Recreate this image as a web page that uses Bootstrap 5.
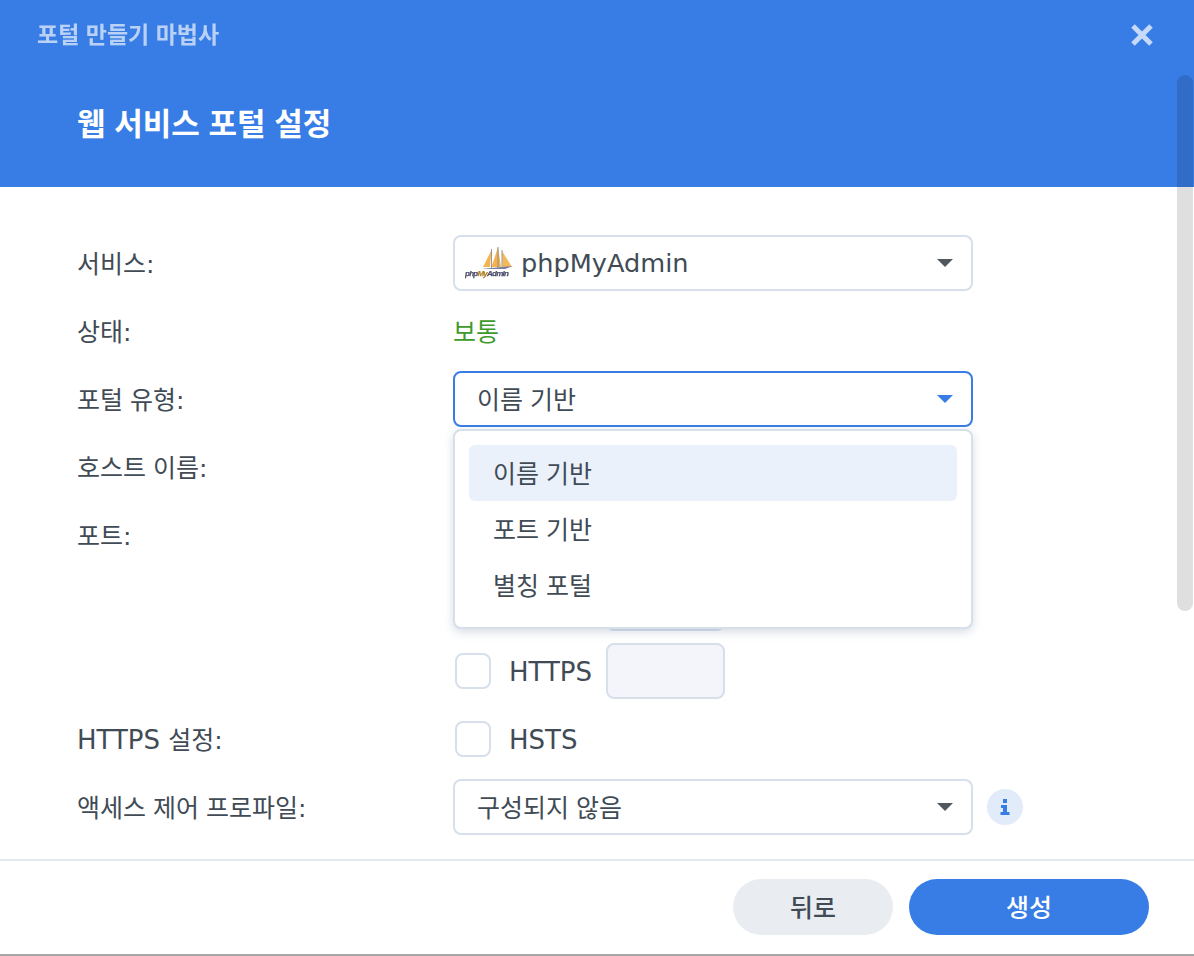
<!DOCTYPE html>
<html lang="ko">
<head>
<meta charset="utf-8">
<title>포털 만들기 마법사</title>
<link href="https://cdn.jsdelivr.net/npm/bootstrap@5.3.0/dist/css/bootstrap.min.css" rel="stylesheet">
<style>
html,body{height:100%;margin:0;overflow:hidden;}
body{font-family:"Noto Sans CJK KR","DejaVu Sans",sans-serif;color:#414b55;font-size:25px;background:#fff;}
.dlg{height:956px;width:1194px;position:relative;overflow:hidden;border-bottom:2px solid #a6a6a6;}
.dlg-head{background:#387de5;height:187px;padding:15px 41px 0 37px;}
.dlg-title{font-size:23px;font-weight:700;line-height:36px;color:#fff;opacity:.65;}
.close-x{width:22px;height:22px;display:block;margin-top:9px;}
.step-title{font-size:31px;font-weight:700;line-height:40px;color:#fff;margin:51px 0 0 40px;}
.dlg-body{height:672px;padding:48px 0 0 77px;overflow:hidden;}
.frow{height:56px;margin-bottom:12px;}
.flabel{width:376px;flex:none;line-height:54px;white-space:nowrap;}
.latin{font-family:"DejaVu Sans",sans-serif;font-size:26px;}
.cl{font-family:"DejaVu Sans",sans-serif;}
.logo-sel .latin{font-size:25.6px;}
.selbox{width:520px;height:56px;border:2px solid #d7e0ea;border-radius:8px;padding:0 18px 0 22px;background:#fff;line-height:50px;}
.selbox.logo-sel{padding-left:10px;}
.selbox.open{border-color:#387de5;}
.seltext{padding-bottom:2px;}
.caret-d{width:0;height:0;border-left:8px solid transparent;border-right:8px solid transparent;border-top:8px solid #50575f;}
.open .caret-d{border-top-color:#387de5;}
.status-ok{color:#3f9a2c;line-height:54px;}
.pma{width:48px;height:32px;margin-right:8px;flex:none;filter:blur(.35px);}
.txtbox{height:56px;border:2px solid #d7e0ea;border-radius:8px;background:#f3f5fa;}
.txtbox.full{width:520px;background:#fff;}
.txtbox.port{width:119px;}
.chk{width:36px;height:36px;border:2px solid #d7e0ea;border-radius:8px;background:#fff;margin:0 18px 0 2px;flex:none;}
.chk-label{width:97px;flex:none;}
.chk-text{padding-top:2px;}
.info-dot{width:36px;height:36px;border-radius:50%;background:#e1ebfa;margin-left:14px;flex:none;}
.menu-pop{position:absolute;left:453px;top:429px;width:520px;height:200px;background:#fff;border:2px solid #d7e0ea;border-radius:8px;box-shadow:0 3px 10px rgba(120,140,165,.3);padding:14px;}
.menu-item{height:56px;line-height:54px;padding-left:24px;border-radius:6px;}
.menu-item.sel{background:#eaf1fb;}
.dlg-foot{position:absolute;left:0;right:0;top:859px;height:95px;border-top:2px solid #e4e8f0;padding:18px 45px 0 0;background:#fff;}
.pill{width:160px;height:56px;border-radius:28px;border:0;font-size:25px;padding:0;font-weight:500;}
.pill-sec{background:#e9edf2;color:#414b55;}
.pill-pri{width:240px;background:#387de5;color:#fff;}
.sbar{position:absolute;left:1177px;top:75px;width:16px;height:536px;border-radius:8px;background:rgba(0,0,0,.125);}
</style>
</head>
<body>
<div class="dlg">
  <div class="dlg-head">
    <div class="d-flex justify-content-between align-items-start">
      <div class="dlg-title">포털 만들기 마법사</div>
      <svg class="close-x" viewBox="0 0 22 22" aria-hidden="true"><path d="M2 2 20 20M20 2 2 20" stroke="#c6d9f8" stroke-width="5" fill="none"/></svg>
    </div>
    <div class="step-title">웹 서비스 포털 설정</div>
  </div>
  <div class="dlg-body">
    <div class="frow d-flex">
      <div class="flabel">서비스<span class="cl">:</span></div>
      <div class="selbox logo-sel d-flex align-items-center justify-content-between">
        <span class="d-flex align-items-center latin">
          <svg class="pma" viewBox="0 0 48 32" aria-hidden="true">
            <path d="M26.500 3 25 20H18Z" fill="#f2b44e"/>
            <path d="M33 0 36 20H26.500Z" fill="#f2b44e"/>
            <path d="M37 4 47 20 37.500 20Z" fill="#f4ba58"/>
            <path d="M26.500 2V22M33 0V22M37 3V22" stroke="#8d8a92" stroke-width=".9"/>
            <path d="M16 22 48 19 40 22Z" fill="#7c80a0"/>
            <text x="0" y="29" font-size="8" font-weight="700" font-style="italic" fill="#4e4e6c" stroke="#4e4e6c" stroke-width=".25" font-family="Liberation Sans,sans-serif" textLength="44">php<tspan fill="#b08228" stroke="#b08228">My</tspan>Admin</text>
          </svg>
          phpMyAdmin
        </span>
        <span class="caret-d"></span>
      </div>
    </div>
    <div class="frow d-flex">
      <div class="flabel">상태<span class="cl">:</span></div>
      <div class="status-ok">보통</div>
    </div>
    <div class="frow d-flex">
      <div class="flabel">포털 유형<span class="cl">:</span></div>
      <div class="selbox open d-flex align-items-center justify-content-between">
        <span class="seltext">이름 기반</span><span class="caret-d"></span>
      </div>
    </div>
    <div class="frow d-flex">
      <div class="flabel">호스트 이름<span class="cl">:</span></div>
      <div class="txtbox full"></div>
    </div>
    <div class="frow d-flex">
      <div class="flabel">포트<span class="cl">:</span></div>
    </div>
    <div class="frow d-flex">
      <div class="flabel"></div>
      <div class="d-flex align-items-center">
        <span class="chk"></span><span class="chk-label"></span><span class="txtbox port"></span>
      </div>
    </div>
    <div class="frow d-flex">
      <div class="flabel"></div>
      <div class="d-flex align-items-center">
        <span class="chk"></span><span class="chk-label chk-text latin">HTTPS</span><span class="txtbox port"></span>
      </div>
    </div>
    <div class="frow d-flex">
      <div class="flabel"><span class="latin">HTTPS </span>설정<span class="cl">:</span></div>
      <div class="d-flex align-items-center">
        <span class="chk"></span><span class="chk-text latin">HSTS</span>
      </div>
    </div>
    <div class="frow d-flex align-items-center">
      <div class="flabel">액세스 제어 프로파일<span class="cl">:</span></div>
      <div class="selbox d-flex align-items-center justify-content-between">
        <span class="seltext">구성되지 않음</span><span class="caret-d"></span>
      </div>
      <span class="info-dot d-flex align-items-center justify-content-center">
        <svg width="10" height="16" viewBox="0 0 10 16" aria-hidden="true"><path d="M3 0H7V4H3ZM1 6H7V13H9.500V16H.5V13H3V9H1Z" fill="#387de5"/></svg>
      </span>
    </div>
  </div>
  <div class="dlg-foot d-flex justify-content-end gap-3">
    <button class="btn pill pill-sec" type="button">뒤로</button>
    <button class="btn pill pill-pri" type="button">생성</button>
  </div>
  <div class="menu-pop">
    <div class="menu-item sel">이름 기반</div>
    <div class="menu-item">포트 기반</div>
    <div class="menu-item">별칭 포털</div>
  </div>
  <div class="sbar"></div>
</div>
<script src="https://cdn.jsdelivr.net/npm/bootstrap@5.3.0/dist/js/bootstrap.bundle.min.js"></script>
</body>
</html>
